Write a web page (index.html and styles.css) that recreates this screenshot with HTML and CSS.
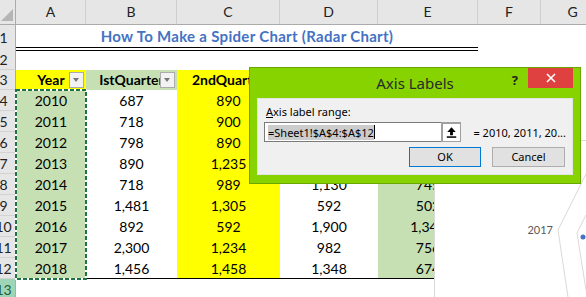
FILE: index.html
```html
<!DOCTYPE html>
<html>
<head>
<meta charset="utf-8">
<link rel="stylesheet" href="styles.css">
</head>
<body>
<div class="sheet">
  <div class="row hdr">
    <div class="corner"><svg class="tri" width="14" height="14" viewBox="0 0 14 14"><path d="M13 1 L13 13 L1 13 Z" fill="#b5b5b5"/></svg></div>
    <div class="ch">A</div><div class="ch">B</div><div class="ch">C</div><div class="ch">D</div><div class="ch">E</div><div class="ch">F</div><div class="ch">G</div>
  </div>
  <div class="row r1">
    <div class="rh"><span>1</span></div>
    <div class="title">How To Make a Spider Chart (Radar Chart)</div>
    <div></div><div></div>
  </div>
  <div class="row r2">
    <div class="rh"><span>2</span></div>
    <div></div><div></div><div></div><div></div><div></div><div></div><div></div>
  </div>
  <div class="row r3">
    <div class="rh"><span>3</span></div>
    <div class="c th yel">Year<span class="dd"></span></div>
    <div class="c th grn">IstQuarter<span class="dd"></span></div>
    <div class="c th yel">2ndQuarter</div>
    <div class="c th"></div>
    <div class="c th grn"></div>
    <div></div><div></div>
  </div>
  <div class="row rd">
    <div class="rh"><span>4</span></div>
    <div class="c grn">2010</div><div class="c">687</div><div class="c yel">890</div><div class="c"></div><div class="c grn"></div><div></div><div></div>
  </div>
  <div class="row rd">
    <div class="rh"><span>5</span></div>
    <div class="c grn">2011</div><div class="c">718</div><div class="c yel">900</div><div class="c"></div><div class="c grn"></div><div></div><div></div>
  </div>
  <div class="row rd">
    <div class="rh"><span>6</span></div>
    <div class="c grn">2012</div><div class="c">798</div><div class="c yel">890</div><div class="c"></div><div class="c grn"></div><div></div><div></div>
  </div>
  <div class="row rd">
    <div class="rh"><span>7</span></div>
    <div class="c grn">2013</div><div class="c">890</div><div class="c yel">1,235</div><div class="c"></div><div class="c grn"></div><div></div><div></div>
  </div>
  <div class="row rd">
    <div class="rh"><span>8</span></div>
    <div class="c grn">2014</div><div class="c">718</div><div class="c yel">989</div><div class="c">1,130</div><div class="c grn">745</div><div></div><div></div>
  </div>
  <div class="row rd">
    <div class="rh"><span>9</span></div>
    <div class="c grn">2015</div><div class="c">1,481</div><div class="c yel">1,305</div><div class="c">592</div><div class="c grn">502</div><div></div><div></div>
  </div>
  <div class="row rd">
    <div class="rh"><span>10</span></div>
    <div class="c grn">2016</div><div class="c">892</div><div class="c yel">592</div><div class="c">1,900</div><div class="c grn">1,345</div><div></div><div></div>
  </div>
  <div class="row rd">
    <div class="rh"><span>11</span></div>
    <div class="c grn">2017</div><div class="c">2,300</div><div class="c yel">1,234</div><div class="c">982</div><div class="c grn">756</div><div></div><div></div>
  </div>
  <div class="row rd last">
    <div class="rh"><span>12</span></div>
    <div class="c grn">2018</div><div class="c bl">1,456</div><div class="c yel bl">1,458</div><div class="c bl">1,348</div><div class="c grn bl">674</div><div></div><div></div>
  </div>
  <div class="row rd">
    <div class="rh sel"><span>13</span></div>
    <div></div><div></div><div></div><div></div><div></div><div></div><div></div>
  </div>
</div>

<svg class="ants" width="72" height="191" viewBox="0 0 72 191">
  <rect x="1" y="1" width="70" height="189" fill="none" stroke="#fff" stroke-width="2"/>
  <rect x="1" y="1" width="70" height="189" fill="none" stroke="#217346" stroke-width="2" stroke-dasharray="4 2"/>
</svg>

<div class="chart">
  <svg width="152" height="157" viewBox="0 0 152 157">
    <polyline points="152,34 149,40 124,90 134,157" fill="none" stroke="#d9d9d9" stroke-width="1"/>
    <polyline points="152,75 143,93 152,150" fill="none" stroke="#d9d9d9" stroke-width="1"/>
    <circle cx="149" cy="97" r="2.5" fill="#4472c4"/>
    <text x="119" y="94" text-anchor="end" class="lbl">2017</text>
  </svg>
</div>

<div class="dialog">
  <div class="titlebar">
    <div></div>
    <div class="dtitle">Axis Labels</div>
    <div class="ctrls">
      <span class="help">?</span>
      <span class="close">
        <svg width="10" height="10" viewBox="0 0 10 10"><path d="M1 1 L9 9 M9 1 L1 9" stroke="#fff" stroke-width="1.6"/></svg>
      </span>
    </div>
  </div>
  <div class="panel">
    <div class="plabel"><u>A</u>xis label range:</div>
    <div class="inrow">
      <div class="input"><span class="selt">=Sheet1!$A$4:$A$12</span><span class="caret"></span></div>
      <div class="collapse">
        <svg width="18" height="18" viewBox="0 0 18 18"><path d="M9 3 L4.5 8 H7.5 V11.5 H10.5 V8 H13.5 Z" fill="#000"/><rect x="4" y="12.5" width="10" height="1.6" fill="#000"/></svg>
      </div>
      <div class="preview">= 2010, 2011, 20...</div>
    </div>
    <div class="btnrow">
      <div class="btn ok">OK</div>
      <div class="btn">Cancel</div>
    </div>
  </div>
</div>
</body>
</html>
```

FILE: styles.css
```css
* { box-sizing: border-box; }
body {
  margin: 0;
  width: 586px;
  height: 297px;
  overflow: hidden;
  position: relative;
  background: #fff;
  font-family: Lato, "Liberation Sans", sans-serif;
  color: #000;
}
.sheet {
  display: flex;
  flex-direction: column;
  width: 605px;
}
.row {
  display: grid;
  grid-template-columns: 16px 70px 91px 103px 98px 100px 63px 64px;
}
.hdr {
  height: 25px;
  background: #e6e6e6;
  border-bottom: 1px solid #ababab;
}
.corner {
  border-right: 1px solid #ababab;
  position: relative;
}
.tri {
  position: absolute;
  left: 0;
  top: 8px;
}
.ch {
  font-size: 14px;
  line-height: 24px;
  text-align: center;
  color: #222;
  border-right: 1px solid #cfcfcf;
}
.r1 { height: 25px; }
.r2 { height: 20px; }
.r3 { height: 20px; }
.rd { height: 21px; }
.rh {
  background: #e6e6e6;
  border-right: 1px solid #ababab;
  border-bottom: 1px solid #d2d2d2;
  display: flex;
  justify-content: center;
  align-items: center;
  padding-right: 8px;
  font-size: 14px;
  color: #222;
  overflow: visible;
}
.rh span { white-space: nowrap; }
.rh.sel { background: #9fd5b7; color: #1d5c3a; }
.title {
  grid-column: 2 / 7;
  text-align: center;
  font-weight: 700;
  font-size: 15px;
  letter-spacing: 0.3px;
  color: #4472c4;
  line-height: 22px;
  border-bottom: 4px double #000;
}
.c {
  font-size: 14px;
  line-height: 21px;
  text-align: center;
  white-space: nowrap;
  overflow: hidden;
  position: relative;
}
.th {
  font-weight: 700;
  line-height: 20px;
}
.yel { background: #ffff00; }
.grn { background: #c6e0b4; }
.bl { border-bottom: 1px solid #000; }
.dd {
  position: absolute;
  right: 2px;
  top: 2px;
  width: 15px;
  height: 16px;
  background: #f2f2f2;
  border: 1px solid #ababab;
}
.dd::after {
  content: "";
  position: absolute;
  left: 3px;
  top: 5px;
  border-left: 3.5px solid transparent;
  border-right: 3.5px solid transparent;
  border-top: 4px solid #777;
}
.ants {
  position: absolute;
  left: 15px;
  top: 89px;
}
.chart {
  position: absolute;
  left: 434px;
  top: 140px;
  width: 160px;
  height: 170px;
  background: #fff;
  border-left: 1px solid #d9d9d9;
  border-top: 1px solid #d9d9d9;
}
.chart svg { display: block; margin-left: -1px; margin-top: -1px; }
.lbl {
  font-family: Lato, "Liberation Sans", sans-serif;
  font-size: 11px;
  fill: #595959;
}
.dialog {
  position: absolute;
  left: 249px;
  top: 67px;
  width: 332px;
  height: 117px;
  background: #86d300;
  border: 1px solid #6aa600;
  display: flex;
  flex-direction: column;
  padding: 0 7px 8px 7px;
  font-family: "Noto Sans", "Liberation Sans", sans-serif;
}
.titlebar {
  height: 30px;
  display: grid;
  grid-template-columns: 1fr auto 1fr;
}
.dtitle {
  font-size: 15px;
  color: #2a2a2a;
  line-height: 28px;
  padding-top: 1px;
}
.ctrls {
  display: flex;
  justify-content: flex-end;
  align-items: flex-start;
  gap: 10px;
}
.help {
  font-weight: 700;
  font-size: 13px;
  color: #222;
  line-height: 20px;
  padding-top: 2px;
}
.close {
  width: 45px;
  height: 20px;
  background: #df4141;
  display: flex;
  align-items: center;
  justify-content: center;
}
.close svg { display: block; }
.panel {
  flex: 1;
  background: #f0f0f0;
  border: 1px solid #e4e4e4;
  padding: 5px 6px 0 6px;
  display: flex;
  flex-direction: column;
}
.plabel {
  font-size: 11px;
  line-height: 16px;
  padding-left: 2px;
  color: #000;
}
.inrow {
  display: flex;
  align-items: center;
  margin-top: 2px;
  height: 20px;
}
.input {
  width: 180px;
  height: 20px;
  background: #fff;
  border: 1px solid #7a7a7a;
  border-right: 0;
  display: flex;
  align-items: center;
  padding-left: 3px;
  font-size: 11px;
}
.selt {
  background: #cccccc;
  line-height: 15px;
  white-space: nowrap;
}
.caret {
  width: 1px;
  height: 14px;
  background: #000;
}
.collapse {
  width: 20px;
  height: 20px;
  background: #fff;
  border: 1px solid #a0a0a0;
  border-left-width: 2px;
  border-top-width: 2px;
  display: flex;
  align-items: center;
  justify-content: center;
}
.collapse svg { display: block; }
.preview {
  font-size: 11px;
  margin-left: 12px;
  white-space: nowrap;
}
.btnrow {
  display: flex;
  justify-content: flex-end;
  gap: 11px;
  margin-top: 5px;
  padding-right: 1px;
}
.btn {
  width: 73px;
  height: 20px;
  background: #e1e1e1;
  border: 1px solid #adadad;
  font-size: 11px;
  line-height: 18px;
  text-align: center;
}
.btn.ok {
  width: 72px;
  border-color: #0078d7;
}
```
